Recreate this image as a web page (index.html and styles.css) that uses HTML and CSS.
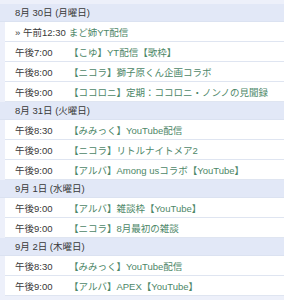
FILE: index.html
```html
<!DOCTYPE html>
<html lang="ja">
<head>
<meta charset="utf-8">
<link rel="stylesheet" href="styles.css">
</head>
<body>
<div class="schedule">
  <div class="day">8月 30日 (月曜日)</div>
  <div class="row"><span class="now">» 午前12:30</span><span class="ev now-ev">まど姉YT配信</span></div>
  <div class="row"><span class="time">午後7:00</span><span class="ev">【こゆ】YT配信【歌枠】</span></div>
  <div class="row"><span class="time">午後8:00</span><span class="ev">【ニコラ】獅子原くん企画コラボ</span></div>
  <div class="row"><span class="time">午後9:00</span><span class="ev">【ココロニ】定期：ココロニ・ノンノの見聞録</span></div>
  <div class="day">8月 31日 (火曜日)</div>
  <div class="row"><span class="time">午後8:30</span><span class="ev">【みみっく】YouTube配信</span></div>
  <div class="row"><span class="time">午後9:00</span><span class="ev">【ニコラ】リトルナイトメア2</span></div>
  <div class="row"><span class="time">午後9:00</span><span class="ev">【アルバ】Among usコラボ【YouTube】</span></div>
  <div class="day">9月 1日 (水曜日)</div>
  <div class="row"><span class="time">午後9:00</span><span class="ev">【アルバ】雑談枠【YouTube】</span></div>
  <div class="row"><span class="time">午後9:00</span><span class="ev">【ニコラ】8月最初の雑談</span></div>
  <div class="day">9月 2日 (木曜日)</div>
  <div class="row"><span class="time">午後8:30</span><span class="ev">【みみっく】YouTube配信</span></div>
  <div class="row"><span class="time">午後9:00</span><span class="ev">【アルバ】APEX【YouTube】</span></div>
</div>
</body>
</html>
```
FILE: styles.css
```css
html, body {
  margin: 0;
  padding: 0;
  background: #edf0fa;
}
body {
  font-family: "Liberation Sans", "Noto Sans CJK JP", sans-serif;
  font-size: 9.5px;
  color: #383838;
}
.schedule {
  padding-top: 4px;
  display: flex;
  flex-direction: column;
}
.day {
  height: 18px;
  line-height: 18px;
  padding-left: 15px;
  background: #e2e8f7;
  border-bottom: 1px solid #dbe2f1;
  box-sizing: border-box;
}
.row {
  margin-left: 5px;
  height: 20px;
  box-sizing: border-box;
  background: #fff;
  border-bottom: 1px solid #dfe5f1;
  display: flex;
  align-items: center;
  padding-left: 10px;
  white-space: nowrap;
  overflow: hidden;
}
.time {
  width: 54px;
  flex: none;
}
.now {
  flex: none;
  margin-right: 3px;
}
.ev {
  color: #4d8768;
}
```
